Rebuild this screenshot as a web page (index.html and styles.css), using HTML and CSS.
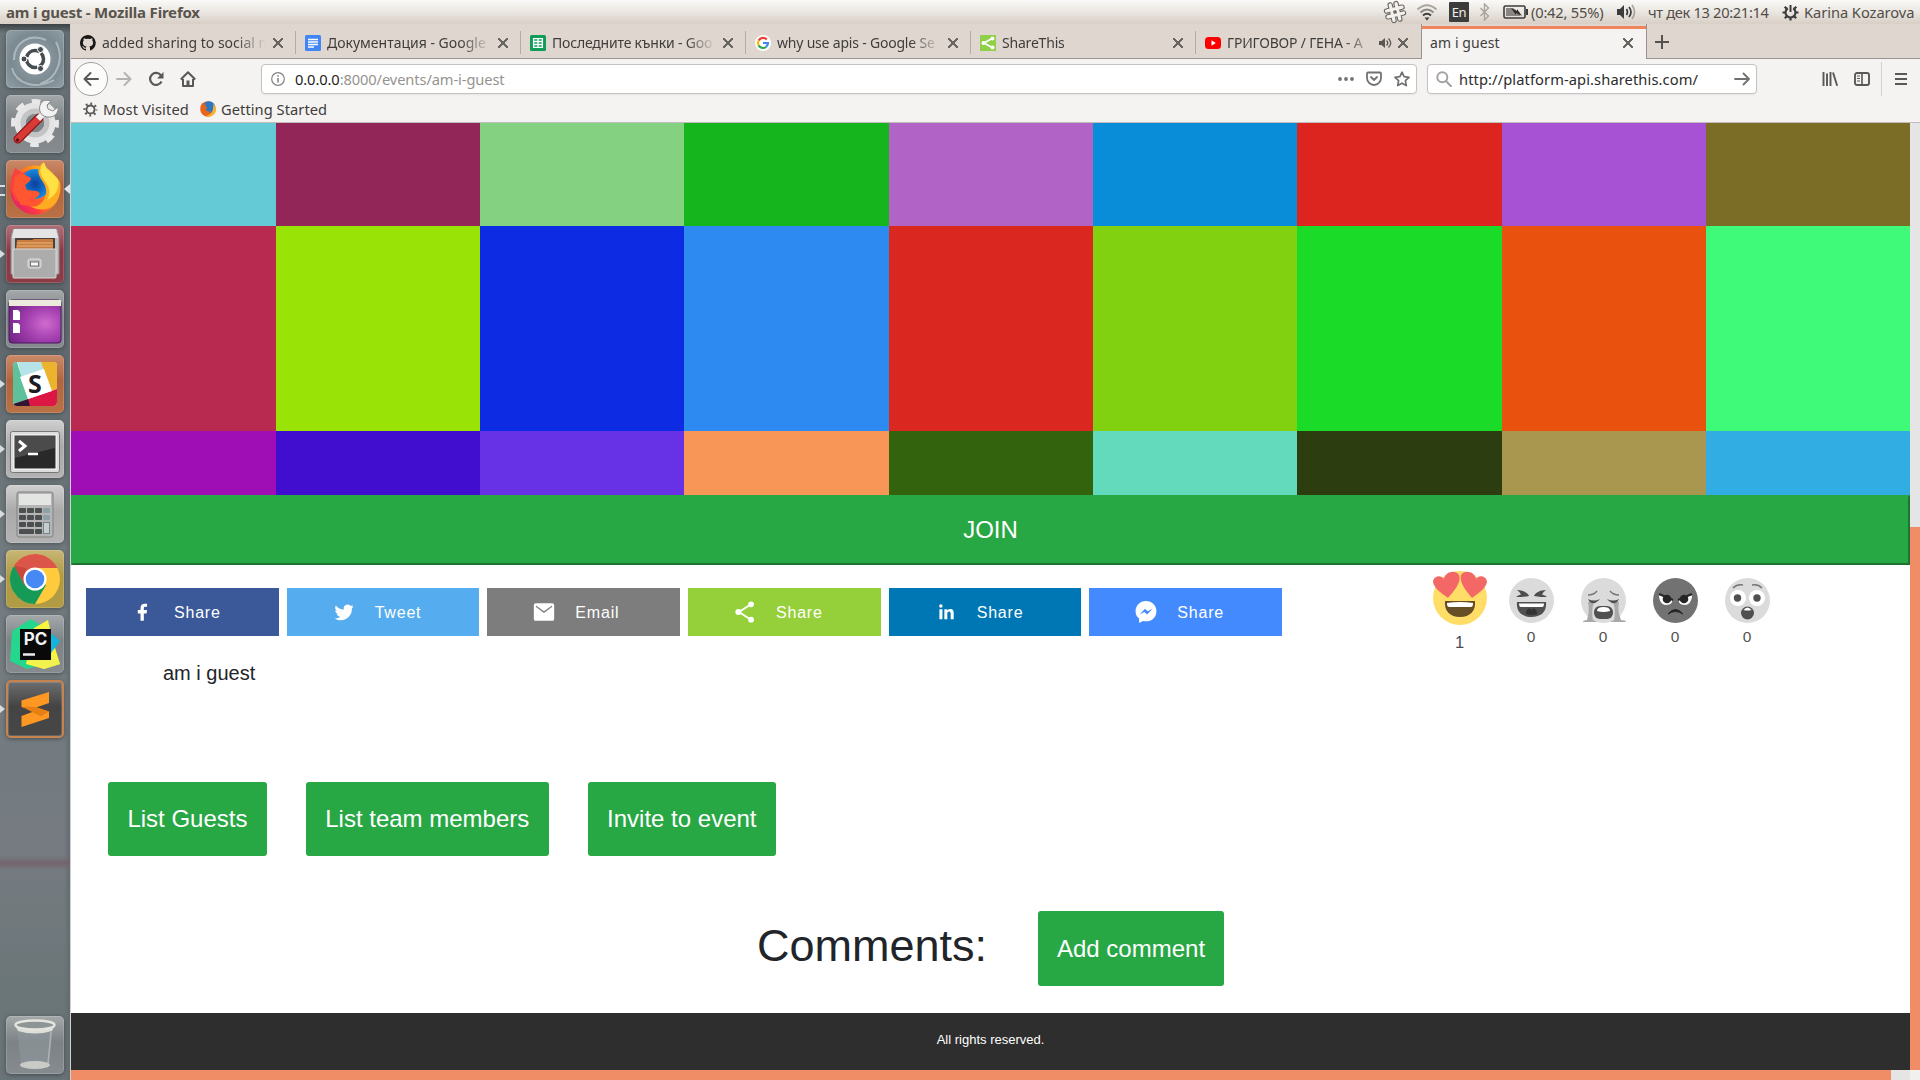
FILE: index.html
```html
<!DOCTYPE html>
<html lang="en">
<head>
<meta charset="utf-8">
<title>am i guest</title>
<link rel="stylesheet" href="styles.css">
</head>
<body>
<header class="panel">
  <span class="panel-title">am i guest - Mozilla Firefox</span>
  <div class="indicators">
    <svg class="ind-hash" width="24" height="24" viewBox="0 0 24 24"><g transform="rotate(-14 12 12)" fill="none" stroke-linecap="round"><path d="M9 4v16M15 4v16M4 9h16M4 15h16" stroke="#6b6762" stroke-width="5.400"/><path d="M9 4v16M15 4v16M4 9h16M4 15h16" stroke="#f3f0ec" stroke-width="3.200"/><path d="M11 11h2v2h-2z" stroke="#6b6762" stroke-width="1"/></g></svg>
    <svg class="ind-wifi" width="22" height="20" viewBox="0 0 22 20" fill="none" stroke-width="2"><path d="M1.500 7.500Q11-1 20.500 7.500" stroke="#aaa49e"/><path d="M4.500 10.500Q11 4.500 17.500 10.500" stroke="#8d8882"/><path d="M7 13.500Q11 10 15 13.500" stroke="#3c3c3c"/><path d="M8.500 15.500h5L11 18.500z" fill="#3c3c3c" stroke="none"/></svg>
    <span class="lang">En</span>
    <svg class="ind-bt" width="12" height="18" viewBox="0 0 12 18" fill="none" stroke="#aaa49e" stroke-width="1.400"><path d="M1.500 5l8 8L5.500 17V1l4 4-8 8"/></svg>
    <svg class="ind-bat" width="25" height="14" viewBox="0 0 25 14"><rect x="1" y="1" width="21" height="12" rx="1.500" fill="none" stroke="#3c3c3c" stroke-width="1.600"/><rect x="23" y="4" width="2" height="6" fill="#3c3c3c"/><path d="M3 3h7l7 5v3H3z" fill="#8a8681"/><path d="M8 3l6 3v-2l5 7-6-3v2z" fill="#2f2f2f"/></svg>
    <span class="ind-battery-text">(0:42, 55%)</span>
    <svg class="ind-snd" width="21" height="16" viewBox="0 0 21 16"><path d="M1 5h3l4-4v14l-4-4H1z" fill="#3c3c3c"/><g fill="none" stroke-width="1.700"><path d="M10.500 5q2 3 0 6M13 3q4 5 0 10" stroke="#3c3c3c"/><path d="M16 1q5 7 0 14" stroke="#aaa49e"/></g></svg>
    <span class="ind-date">чт дек 13 20:21:14</span>
    <svg class="ind-gear" width="17" height="17" viewBox="0 0 17 17"><g fill="none" stroke="#3c3c3c"><path d="M5.800 4.300a5 5 0 1 0 5.400 0" stroke-width="2.200"/><path d="M8.500 1v7" stroke-width="2"/><path d="M3.500 8.500H.5M16.500 8.500h-3M5 12l-2.200 2.200M12 12l2.200 2.200M8.500 13.500v3M4.500 4.500L2.700 2.700M12.500 4.500l1.800-1.800" stroke-width="2.200"/></g></svg>
    <span class="ind-user">Karina Kozarova</span>
  </div>
</header>

<div class="desktop">
<aside class="launcher">
  <div class="tile t-dash"><svg viewBox="0 0 58 58"><path d="M8 30C8 12 24 3 40 10M50 12c8 15 3 36-16 42M48 50C30 60 10 54 6 38" fill="none" stroke="#c9d4d8" stroke-width="2" opacity=".6"/><circle cx="29" cy="29" r="15.500" fill="#fff"/><g fill="none" stroke="#454d50" stroke-width="3.500"><circle cx="29" cy="29" r="8.500" stroke-dasharray="15.800 2" stroke-dashoffset="7"/></g><g fill="#454d50" stroke="#fff" stroke-width="1"><circle cx="18" cy="29" r="3"/><circle cx="34.500" cy="19.500" r="3"/><circle cx="34.500" cy="38.500" r="3"/></g></svg></div>
  <div class="tile t-gray"><svg viewBox="0 0 58 58"><circle cx="29" cy="28" r="15" fill="none" stroke="#e4e4e4" stroke-width="11"/><circle cx="29" cy="28" r="21.500" fill="none" stroke="#e8e8e8" stroke-width="5" stroke-dasharray="8.500 8.400" stroke-dashoffset="4"/><circle cx="29" cy="28" r="12" fill="none" stroke="#c2c4c6" stroke-width="5"/><path d="M12 44L33 23" stroke="#8f1a1a" stroke-width="9" stroke-linecap="round"/><path d="M12 44L33 23" stroke="#d93a35" stroke-width="6.500" stroke-linecap="round"/><path d="M32 24l5-5" stroke="#eee" stroke-width="6"/><path d="M37 6c-6 5-4 15 4 16s12-5 11-10l-5 4-5-2-1-4 4-4c-3-1-6-1-8 0z" fill="#f2f2f2" stroke="#8b8b8b"/><circle cx="11.500" cy="45" r="1.700" fill="#5b1515"/></svg></div>
  <div class="tile t-orange run-multi focused"><svg viewBox="0 0 58 58"><defs><linearGradient id="fx" x1="1" y1=".1" x2=".1" y2=".7"><stop offset="0" stop-color="#ffd93b"/><stop offset=".45" stop-color="#ff8d14"/><stop offset=".8" stop-color="#ff3647"/><stop offset="1" stop-color="#e8285f"/></linearGradient><radialGradient id="fb"><stop offset="0" stop-color="#0a3f9c"/><stop offset="1" stop-color="#168be0"/></radialGradient></defs><circle cx="29" cy="30" r="24.500" fill="url(#fx)"/><path d="M4.500 30C4 20 7 13 9 8l7 5q5-3 11-2l4 20-8 14L9 40z" fill="#fb4042"/><circle cx="29" cy="24" r="15" fill="url(#fb)"/><path d="M9 16l7-3 9 5-1 3-5 4 2 5 9 1q5 1 3 4-5 6-11 4 8 5 16-1l-3 9-20-2-8-14z" fill="#fd5630"/><path d="M36 3c-6 6-4 12 1 19 6 9 3 17-3 22-3 3-8 3-11 2 25 12 34-10 31-24C51 15 41 12 36 3z" fill="#ffab22"/><path d="M38 2c-6 6-4 13 1 19 5 7 6 13 2 19 9-4 13-13 11-20C49 14 40 11 38 2z" fill="#ffe045"/></svg></div>
  <div class="tile t-red run"><svg viewBox="0 0 58 58"><path d="M7 4h44l2 8v37H5V12z" fill="#bfbfbf" stroke="#8c8c8c"/><path d="M8 4h42l2 9H6z" fill="#e4e4e4"/><rect x="9" y="13" width="40" height="13" fill="#4b403a"/><path d="M11 15h15l2-1h19v10H10z" fill="#c97c40"/><path d="M11 18h36M11 21h36" stroke="#eab678" stroke-width="1"/><rect x="7" y="24" width="43" height="29" rx="1" fill="#acacac" stroke="#d9d9d9"/><rect x="22" y="34" width="13" height="9" rx="2" fill="#bbb" stroke="#e2e2e2"/><rect x="24.500" y="37" width="8" height="4" fill="#f8f8f8" stroke="#777"/></svg></div>
  <div class="tile t-gray"><svg viewBox="0 0 58 58"><defs><radialGradient id="dk" cx=".7" cy=".55" r=".8"><stop offset="0" stop-color="#cf6bcf"/><stop offset=".5" stop-color="#a03cac"/><stop offset="1" stop-color="#6d2383"/></radialGradient></defs><rect x="3" y="10" width="52" height="43" rx="3" fill="url(#dk)" stroke="#4d175f"/><path d="M3 10h52v6H3z" fill="#eceadb"/><path d="M7 20h5l2 2v8H7zM7 33h5l2 2v8H7z" fill="#fff"/></svg></div>
  <div class="tile t-orange run"><svg viewBox="0 0 58 58"><clipPath id="sl"><rect x="7" y="7" width="44" height="44" rx="4"/></clipPath><g clip-path="url(#sl)"><path d="M7 7h44v44H7z" fill="#fff"/><path d="M12 7h23l3 7-23 8z" fill="#b5e3e8"/><path d="M35 7h16v27l-6 2z" fill="#ecb32d"/><path d="M7 7h4l11 37-15 5z" fill="#5ec19c"/><path d="M22 44l29-10v17H20z" fill="#dc1744"/><path d="M7 49l15-5 2 7H7z" fill="#311633"/><path d="M14 22l24-8 8 22-24 8z" fill="#fff"/></g><text x="29" y="38" text-anchor="middle" class="slack-s">S</text></svg></div>
  <div class="tile t-light run"><svg viewBox="0 0 58 58"><rect x="4.500" y="11.500" width="49" height="41" rx="2" fill="#dcdcdc" stroke="#777"/><rect x="8" y="15" width="42" height="34" fill="#292929" stroke="#fff"/><path d="M9 16h40v12L9 38z" fill="#4b4b4b"/><path d="M13 21l6 5-6 5" fill="none" stroke="#fff" stroke-width="3"/><path d="M22 34h10" stroke="#fff" stroke-width="2.500"/></svg></div>
  <div class="tile t-light run"><svg viewBox="0 0 58 58"><rect x="11" y="7" width="36" height="45" rx="2" fill="#b5b5b5" stroke="#808080"/><rect x="13" y="9" width="32" height="11" fill="#e3e5e3"/><g fill="#4b4f50"><rect x="13" y="23" width="7" height="5" rx="1"/><rect x="21" y="23" width="7" height="5" rx="1"/><rect x="29" y="23" width="7" height="5" rx="1"/><rect x="13" y="30" width="7" height="5" rx="1"/><rect x="21" y="30" width="7" height="5" rx="1"/><rect x="29" y="30" width="7" height="5" rx="1"/><rect x="13" y="37" width="7" height="5" rx="1"/><rect x="21" y="37" width="7" height="5" rx="1"/><rect x="29" y="37" width="7" height="5" rx="1"/><rect x="13" y="44" width="15" height="5" rx="1"/><rect x="29" y="44" width="7" height="5" rx="1"/></g><g fill="#8da1a9"><rect x="37" y="23" width="7" height="5" rx="1"/><rect x="37" y="30" width="7" height="5" rx="1"/></g><rect x="37.500" y="37.500" width="6" height="11" fill="#c3ced2" stroke="#75858b"/></svg></div>
  <div class="tile t-gold run"><svg viewBox="0 0 58 58"><circle cx="29" cy="29" r="25" fill="#ffcb3d"/><path d="M29 29L7.300 16.500A25 25 0 0 0 29 54l11-19z" fill="#159a58"/><path d="M29 18h22.400A25 25 0 0 0 8 15.500L18 35z" fill="#dc5549"/><path d="M8 15.500L18.500 34 29 29z" fill="#159a58"/><path d="M8 15.500L18 33l2-15z" fill="#c9473d"/><circle cx="29" cy="29" r="11.500" fill="#fff"/><circle cx="29" cy="29" r="9.300" fill="#4688f4"/></svg></div>
  <div class="tile t-gray"><svg viewBox="0 0 58 58"><path d="M6 16L25 4l14 9-8 38-10 3-17-8z" fill="#25d68d"/><path d="M28 13L42 5l4 18 8 26-16 5-18-5z" fill="#f8f440"/><path d="M43 16l11 10-9 12z" fill="#12b5dd"/><path d="M21 45l20-10 13 14-16 5z" fill="#f1f24d"/><rect x="14" y="14" width="31" height="31" fill="#090909"/><text x="29.500" y="30" text-anchor="middle" class="pc-text">PC</text><path d="M17 39.500h12" stroke="#eee" stroke-width="2.500"/></svg></div>
  <div class="tile t-sublime run"><svg viewBox="0 0 58 58"><path d="M15.500 20.500L43 12v11L30 27.500l13 4V38L15.500 47V36L29 31l-13.500-4z" fill="#ff9822"/><path d="M15.500 26.500L30 27l13 4.500-8 5z" fill="#e77f14"/></svg></div>
  <div class="tile t-gray t-trash"><svg viewBox="0 0 58 58"><path d="M11 12l4 38q14 7 28 0l4-38z" fill="#8d989c" opacity=".6"/><ellipse cx="29" cy="49" rx="15" ry="4" fill="#c9ccc6"/><path d="M9 9l3 6q17 5 34 0l3-6z" fill="#deded9"/><ellipse cx="29" cy="9" rx="19.500" ry="4.500" fill="#8e9596" stroke="#e4e4df" stroke-width="2.500"/><path d="M45 16l-3 32" stroke="#c4cccd" stroke-width="1.500" opacity=".6"/></svg></div>
</aside>

<main class="browser">
  <nav class="tabs">
    <div class="tab"><svg class="fav" viewBox="0 0 16 16"><path fill="#191717" d="M8 0C3.600 0 0 3.600 0 8c0 3.500 2.300 6.500 5.500 7.600.4.100.5-.2.500-.4v-1.500c-2.200.5-2.700-1-2.700-1-.4-.9-.9-1.200-.9-1.200-.7-.5.100-.5.100-.5.800.1 1.200.8 1.200.8.700 1.300 1.900.9 2.300.7.100-.5.300-.9.500-1.100C4.700 11.200 2.900 10.500 2.900 7.500c0-.9.300-1.600.8-2.100-.1-.2-.4-1 .1-2.100 0 0 .7-.2 2.200.8a7.700 7.700 0 0 1 4 0c1.500-1 2.200-.8 2.200-.8.400 1.100.2 1.900.1 2.100.5.600.8 1.300.8 2.100 0 3.100-1.900 3.700-3.700 3.900.3.300.6.700.6 1.500v2.200c0 .2.100.5.500.4A8 8 0 0 0 8 0z"/></svg><span class="tab-text w-160 loose">added sharing to social n</span><i class="x"></i></div>
    <div class="tab"><svg class="fav" viewBox="0 0 16 16"><rect width="16" height="16" rx="1.500" fill="#4285f4"/><path d="M3 4.500h10M3 7h10M3 9.500h10M3 12h6" stroke="#fff" stroke-width="1.300"/></svg><span class="tab-text w-160 loose">Документация - Google</span><i class="x"></i></div>
    <div class="tab"><svg class="fav" viewBox="0 0 16 16"><rect width="16" height="16" rx="1.500" fill="#0f9d58"/><path d="M3.600 3.600h8.800v8.800H3.600zM3.600 6.500h8.800M3.600 9.500h8.800M8 3.600v8.800" fill="none" stroke="#fff" stroke-width="1.300"/></svg><span class="tab-text w-160">Последните кънки - Goo</span><i class="x"></i></div>
    <div class="tab"><svg class="fav" viewBox="0 0 16 16"><circle cx="8" cy="8" r="8" fill="#fff"/><g fill="none" stroke-width="2.200"><path d="M11.800 4.600A5 5 0 0 0 3.600 5.600" stroke="#ea4335"/><path d="M3.600 5.600a5 5 0 0 0 0 4.800" stroke="#fbbc05"/><path d="M3.600 10.400a5 5 0 0 0 7.700 1.300" stroke="#34a853"/><path d="M11.300 11.700A5 5 0 0 0 13 8H8" stroke="#4285f4"/></g></svg><span class="tab-text w-160">why use apis - Google Se</span><i class="x"></i></div>
    <div class="tab"><svg class="fav" viewBox="0 0 16 16"><path d="M0 0h16v16H0z" fill="#8ed047"/><path d="M13 3L4 8l9 5" fill="none" stroke="#fff" stroke-width="1.800"/><g fill="#fff"><circle cx="12.500" cy="3.500" r="2"/><circle cx="3.500" cy="8" r="2"/><circle cx="12.500" cy="12.500" r="2"/></g></svg><span class="tab-text w-160">ShareThis</span><i class="x"></i></div>
    <div class="tab"><svg class="fav" viewBox="0 0 16 16"><rect y="2" width="16" height="12" rx="3.500" fill="#f00"/><path d="M6.500 5.300v5.400L10.800 8z" fill="#fff"/></svg><span class="tab-text w-146">ГРИГОВОР / ГЕНА - А</span><svg class="tab-sound" width="14" height="12" viewBox="0 0 14 12"><path d="M0 4h2.500L6 1v10L2.500 8H0z" fill="#5a5652"/><path d="M7.500 3.500q2.500 2.500 0 5M9.500 1.500q4.500 4.500 0 9" fill="none" stroke="#5a5652" stroke-width="1.300"/></svg><i class="x"></i></div>
    <div class="tab active"><span class="tab-text active-text">am i guest</span><i class="x"></i></div>
    <svg class="plus" width="14" height="14" viewBox="0 0 14 14"><path d="M7 0v14M0 7h14" stroke="#55514e" stroke-width="2"/></svg>
  </nav>

  <div class="toolbar">
    <span class="back"><svg width="16" height="16" viewBox="0 0 16 16" fill="none" stroke="#5a5857" stroke-width="2" stroke-linecap="round" stroke-linejoin="round"><path d="M15 8H1.500M7.500 2l-6 6 6 6"/></svg></span>
    <svg class="fwd" width="16" height="16" viewBox="0 0 16 16" fill="none" stroke="#b5b3b1" stroke-width="2" stroke-linecap="round" stroke-linejoin="round"><path d="M1 8h13.500M8.500 2l6 6-6 6"/></svg>
    <svg class="reload" width="16" height="16" viewBox="0 0 16 16"><path d="M13.500 10.500A6 6 0 1 1 13 4.500" fill="none" stroke="#5a5857" stroke-width="2.200"/><path d="M15.500 1v6.500H9z" fill="#5a5857"/></svg>
    <svg class="home" width="16" height="16" viewBox="0 0 16 16"><path d="M.8 8.500L8 1.300l7.200 7.200M3 8v7h10V8" fill="none" stroke="#5a5857" stroke-width="2" stroke-linejoin="round"/><path d="M6.500 9.500h3V15h-3z" fill="#5a5857"/></svg>
    <div class="urlbar">
      <svg width="14" height="14" viewBox="0 0 14 14"><circle cx="7" cy="7" r="6.300" fill="none" stroke="#858381" stroke-width="1.200"/><path d="M7 6v4.500M7 3.300v1.500" stroke="#858381" stroke-width="1.600"/></svg>
      <span class="url"><b>0.0.0.0</b>:8000/events/am-i-guest</span>
      <svg class="dots" width="16" height="16" viewBox="0 0 16 16" fill="#737170"><circle cx="2" cy="8" r="1.900"/><circle cx="8" cy="8" r="1.900"/><circle cx="14" cy="8" r="1.900"/></svg>
      <svg width="16" height="16" viewBox="0 0 16 16" fill="none" stroke="#737170" stroke-width="1.800" stroke-linecap="round" stroke-linejoin="round"><path d="M2 1.500h12q1 0 1 1V7a7 7 0 0 1-14 0V2.500q0-1 1-1zM5 6l3 3 3-3"/></svg>
      <svg class="star" width="16" height="16" viewBox="0 0 16 16" fill="none" stroke="#737170" stroke-width="1.700" stroke-linejoin="round"><path d="M8 1.200l2.100 4.500 4.900.6-3.600 3.400.9 4.900L8 12.200l-4.300 2.400.9-4.900L1 6.300l4.900-.6z"/></svg>
    </div>
    <div class="search">
      <svg width="16" height="16" viewBox="0 0 16 16" fill="none" stroke="#a5a3a1" stroke-width="2" stroke-linecap="round"><circle cx="6.300" cy="6.300" r="5"/><path d="M10.200 10.200l4.800 5"/></svg>
      <span class="search-text">http://platform-api.sharethis.com/</span>
      <svg width="16" height="16" viewBox="0 0 16 16" fill="none" stroke="#737170" stroke-width="1.800" stroke-linecap="round" stroke-linejoin="round"><path d="M1 8h14M9.500 2.500L15 8l-5.500 5.500"/></svg>
    </div>
    <svg class="lib" width="16" height="14" viewBox="0 0 16 14" stroke="#5a5857" stroke-width="1.900" fill="none"><path d="M1.500 0v14M5 1.500V14M8.500 0v14M11 .5l4.200 13.300"/></svg>
    <svg class="side" width="16" height="14" viewBox="0 0 16 14" fill="none" stroke="#5a5857"><rect x="1" y="1" width="14" height="12" rx="2" stroke-width="1.900"/><path d="M8 1v12" stroke-width="1.600"/><path d="M3 4h3M3 6.500h3M3 9h3" stroke-width="1.200"/></svg>
    <i class="vsep"></i>
    <svg class="menu" width="12" height="12" viewBox="0 0 12 12"><path d="M0 1h12M0 6h12M0 11h12" stroke="#5a5857" stroke-width="2"/></svg>
  </div>

  <div class="bookmarks">
    <svg width="15" height="15" viewBox="0 0 15 15" fill="none" stroke="#5a5857"><circle cx="7.500" cy="7.500" r="4" stroke-width="1.800"/><circle cx="7.500" cy="7.500" r="5.900" stroke-width="2.400" stroke-dasharray="1.800 2.834" stroke-dashoffset=".9"/></svg>
    <span class="bm1">Most Visited</span>
    <svg width="16" height="16" viewBox="0 0 16 16"><circle cx="8" cy="8" r="7.800" fill="#e8641b"/><circle cx="9" cy="6.300" r="6" fill="#2a78c4"/><path d="M.8 5L2 2l2 1.800 2.500-.2L5.500 5.500l2 1.500-2 1.500c2 2.500 4 2 5.500 1.500-1 3-4 3.500-6 2.500L1 9z" fill="#e8641b"/><path d="M13 3c3 3 3.500 6 2 9s-6 4-9 3c5-1 8-5 7-12z" fill="#f9b22d"/></svg>
    <span class="bm2">Getting Started</span>
  </div>

  <div class="viewport">
    <div class="page">
      <div class="mosaic">
        <i class="c1"></i><i class="c2"></i><i class="c3"></i><i class="c4"></i><i class="c5"></i><i class="c6"></i><i class="c7"></i><i class="c8"></i><i class="c9"></i>
        <i class="c10"></i><i class="c11"></i><i class="c12"></i><i class="c13"></i><i class="c14"></i><i class="c15"></i><i class="c16"></i><i class="c17"></i><i class="c18"></i>
        <i class="c19"></i><i class="c20"></i><i class="c21"></i><i class="c22"></i><i class="c23"></i><i class="c24"></i><i class="c25"></i><i class="c26"></i><i class="c27"></i>
      </div>
      <button class="join">JOIN</button>
      <section class="social">
        <div class="shares">
          <a class="share fb"><svg viewBox="0 0 40 40"><path d="M21.500 36V22.500h5l.8-6h-5.800v-3.400c0-1.700.5-2.800 2.900-2.800h3V5.200C26.900 5.100 25.100 5 23 5c-4.500 0-7.500 2.700-7.500 7.700v3.800h-5v6h5V36z"/></svg><span>Share</span></a>
          <a class="share tw"><svg viewBox="0 0 40 40"><path d="M37.500 10c-1.200.6-2.700 1-4.100 1.200 1.500-.9 2.600-2.300 3.100-3.900-1.400.8-2.900 1.400-4.500 1.700a7.100 7.100 0 0 0-12.200 6.500A20.300 20.300 0 0 1 5.200 8a7.100 7.100 0 0 0 2.200 9.500c-1.200 0-2.300-.3-3.200-.9 0 3.600 2.400 6.500 5.700 7.100-1 .3-2.100.4-3.200.1.900 2.900 3.600 4.900 6.700 5A14.500 14.500 0 0 1 3 31.700a20.300 20.300 0 0 0 31.300-18c1.400-1 2.500-2.200 3.200-3.700z"/></svg><span>Tweet</span></a>
          <a class="share em"><svg viewBox="0 0 40 40"><path fill-rule="evenodd" d="M5 4h30A3.500 3.500 0 0 1 38.500 7.500v25a3.500 3.500 0 0 1-3.500 3.500H5A3.500 3.500 0 0 1 1.500 32.500v-25A3.500 3.500 0 0 1 5 4zM5.500 8v3L20 22l14.500-11V8L20 18.500z"/></svg><span>Email</span></a>
          <a class="share st"><svg viewBox="0 0 40 40"><path d="M31 6L9 20l22 14" fill="none" stroke="#fff" stroke-width="3.500"/><circle cx="31" cy="6" r="5.200"/><circle cx="8" cy="20" r="5.500"/><circle cx="31" cy="34" r="5.200"/></svg><span>Share</span></a>
          <a class="share li"><svg viewBox="0 0 40 40"><path d="M8 15h5.500v18H8zM10.700 6a3.200 3.200 0 1 1 0 6.400 3.200 3.200 0 0 1 0-6.400zM17 15h5.200v2.500c.8-1.500 2.600-3 5.300-3 5.600 0 6.500 3.800 6.500 8.500v10h-5.500v-8.800c0-2.200 0-4.900-2.900-4.900s-3.200 2.300-3.200 4.700v9H17z"/></svg><span>Share</span></a>
          <a class="share ms"><svg viewBox="0 0 40 40"><path fill-rule="evenodd" d="M20 0c11 0 19 8 19 18.500S31 37 20 37c-2 0-3.800-.2-5.500-.8L7.500 40v-8C3.500 28.500 1 24 1 18.500 1 8 9 0 20 0zM8.500 24.500L18 14l5 4.500 9-4.500-10 10.500-5-4.500z"/></svg><span>Share</span></a>
        </div>
        <div class="reactions">
          <div class="reaction chosen"><svg viewBox="0 0 54 54"><circle cx="27" cy="27" r="27" fill="#ffdd67"/><path d="M12 30h30c1 10-5 16-15 16s-16-6-15-16z" fill="#664e27"/><path d="M14 32q13-2 26 0c0 4-1 4-4 4H18c-3 0-4 0-4-4z" fill="#fff"/><path d="M15 27C8 22 1 17 0 11 0 5 8 3 11 8 12 1 22-2 26 4c3 8-6 17-11 23z" fill="#f46767"/><path d="M39 27c7-5 14-10 15-16 0-6-8-8-11-3C42 1 32-2 28 4c-2 8 6 17 11 23z" fill="#f46767"/></svg><span>1</span></div>
          <div class="reaction"><svg viewBox="0 0 45 45"><circle cx="22.500" cy="22.500" r="22.500" fill="#dbdbdb"/><path d="M8 24h29c1 10-5 15-14.500 15S7 34 8 24z" fill="#505050"/><path d="M10 25.500h25c0 3-1 3.500-3 3.500H13c-2 0-3-.5-3-3.500z" fill="#fff"/><path d="M17 36c0-7 5-6 5.500-4 .5-2 5.500-3 5.500 4q-5 2-11 0z" fill="#343434"/><path d="M8 12c6 0 11 3 12 6-5 1-9 1-13 1q2-2 5-2.500Q11 14 8 12zM37 12c-6 0-11 3-12 6 5 1 9 1 13 1q-2-2-5-2.500 1-2.500 4-4.500z" fill="#4d4d4d"/></svg><span>0</span></div>
          <div class="reaction"><svg viewBox="0 0 45 45"><circle cx="22.500" cy="22.500" r="22.500" fill="#dbdbdb"/><path d="M7 24h6q-3 9-1 18l4 2H2q0-2 4-2 3-10 1-18zM38 24h-6q3 9 1 18l-4 2h16q0-2-5-2-4-10-2-18z" fill="#a9a9a9"/><rect x="13" y="28" width="19" height="13" rx="6" fill="#505050"/><path d="M16 33q0-4 6.500-4t6.500 4q-6.500 2-13 0z" fill="#fff"/><g fill="#505050"><path d="M7 21q6 3 12 0-4 5-8 4-3-1-4-4zM38 21q-6 3-12 0 4 5 8 4 3-1 4-4z"/></g><path d="M7 17q6 0 9-4M38 17q-6 0-9-4" fill="none" stroke="#757575" stroke-width="1.400"/></svg><span>0</span></div>
          <div class="reaction"><svg viewBox="0 0 45 45"><circle cx="22.500" cy="22.500" r="22.500" fill="#727272"/><path d="M6 17c0 6 3 10 7 10 5 0 7-3 6-6zM39 17c0 6-3 10-7 10-5 0-7-3-6-6z" fill="#fff"/><circle cx="14" cy="21" r="4.300" fill="#262626"/><circle cx="31" cy="21" r="4.300" fill="#262626"/><path d="M6 16l14 6M39 16l-14 6" stroke="#262626" stroke-width="2"/><path d="M15 36q7.500-9 15 0-7.500-5-15 0z" fill="#262626" stroke="#262626"/></svg><span>0</span></div>
          <div class="reaction"><svg viewBox="0 0 45 45"><circle cx="22.500" cy="22.500" r="22.500" fill="#dbdbdb"/><circle cx="13" cy="20" r="8" fill="#fff"/><circle cx="32" cy="20" r="8" fill="#fff"/><circle cx="12.500" cy="20" r="3.700" fill="#505050"/><circle cx="32" cy="20" r="3.700" fill="#505050"/><circle cx="22.500" cy="35" r="6.500" fill="#505050"/><path d="M18.500 32q4-5 8 0-4 1-8 0z" fill="#fff"/><path d="M8 10q4-4 10-3M37 10q-4-4-10-3" fill="none" stroke="#757575" stroke-width="1.500"/></svg><span>0</span></div>
        </div>
      </section>
      <p class="event-name">am i guest</p>
      <div class="actions"><a class="btn">List Guests</a><a class="btn">List team members</a><a class="btn">Invite to event</a></div>
      <div class="comments"><h2>Comments:</h2><a class="btn">Add comment</a></div>
      <footer>All rights reserved.</footer>
    </div>
    <div class="vscroll"><i></i></div>
    <div class="hscroll"><i></i></div>
    <div class="corner"></div>
  </div>
</main>
</div>
</body>
</html>
```
FILE: styles.css
```css
* { box-sizing: border-box; }
body { margin: 0; width: 1920px; height: 1080px; overflow: hidden; font: 14.670px/20px "Noto Sans", "Open Sans", sans-serif; color: #3f3d3b; background: #737a7e; }
svg { display: block; flex: none; }
span { white-space: nowrap; }

.panel { height: 24px; display: flex; justify-content: space-between; align-items: center; padding: 0 6px; background: linear-gradient(#fbfaf8, #ece8e3 45%, #d8cfc6); }
.panel-title { padding-bottom: 1px; font-weight: 700; font-size: 15px; color: #59544c; letter-spacing: -.2px; }
.indicators { display: flex; align-items: center; height: 24px; color: #514d48; }
.ind-hash { margin-right: 9px; }
.ind-wifi { margin-right: 11px; }
.lang { width: 20px; height: 20px; background: #3c3c3c; color: #f2efeb; text-align: center; font-size: 13px; line-height: 20px; border-radius: 1px; letter-spacing: -.5px; }
.ind-bt { margin: 0 11px 0 10px; }
.ind-bat { margin: 0 3px 0 1px; }
.ind-battery-text, .ind-date, .ind-user { padding-bottom: 1px; }
.ind-battery-text { width: 73px; letter-spacing: -.2px; }
.ind-snd { margin: 0 11px 0 12px; }
.ind-date { width: 122px; letter-spacing: -.33px; }
.ind-gear { margin: 0 5px 0 12px; }
.ind-user { width: 110px; letter-spacing: -.05px; }

.desktop { display: flex; height: 1056px; }
.launcher { width: 71px; border-right: 1px solid #cfd2d3; padding: 6px 0 6px 6px; display: flex; flex-direction: column; gap: 7px; background: linear-gradient(#3b4043, transparent 9px), linear-gradient(transparent 832px, rgba(116, 95, 105, .8) 839px, transparent 846px), linear-gradient(90deg, transparent 64px, #646b70), linear-gradient(#6d777b, #5d666b 300px, #687276 400px, #737c80 540px, #757b80 840px, #6b7679 960px, #697478); }
.tile { position: relative; width: 58px; height: 58px; border-radius: 5px; flex: none; box-shadow: 0 1px 4px rgba(30, 35, 38, .5), inset 0 0 0 1px rgba(255, 255, 255, .16); }
.tile svg { width: 58px; height: 58px; }
.t-dash { background: radial-gradient(circle, #97a5ab, #7b8a90 60%, #91a0a7); }
.t-gray { background: linear-gradient(#a4a8aa, #7c8285 45%, #858b8e); }
.t-orange { background: linear-gradient(#cb8a68, #b0653f 45%, #ba7144); }
.t-red { background: linear-gradient(#b37078, #8b3846 45%, #8d3c45); }
.t-light { background: linear-gradient(#d0d0d0, #aaa 45%, #b3b3b3); }
.t-gold { background: linear-gradient(#c7b677, #b09a43 45%, #b19c45); }
.t-sublime { background: linear-gradient(#6d6d6d, #444 45%, #474747); border: 2px solid #c58350; }
.t-sublime svg { margin: -2px; }
.t-trash { margin-top: auto; }
.run::before, .run-multi::before { content: ""; position: absolute; left: -6px; top: 25px; border: 4.500px solid transparent; border-left: 5px solid #d9dcdd; border-right: 0; }
.t-sublime::before { left: -8px; top: 23px; }
.run-multi::before { width: 5px; height: 7px; border: 0; border-top: 2px solid #d9dcdd; border-bottom: 2px solid #d9dcdd; }
.focused::after { content: ""; position: absolute; right: -6px; top: 24px; border: 5px solid transparent; border-right: 6px solid #e3e5e6; border-left: 0; }
.slack-s { font: 700 25px "Noto Sans", sans-serif; fill: #1c1c22; }
.pc-text { font: 700 17px Inter, sans-serif; fill: #f2f2f2; }

.browser { flex: 1; display: flex; flex-direction: column; background: #f4f3f1; }
.tabs { height: 35px; display: flex; background: #dfd6cf; border-bottom: 1px solid #9b948e; }
.tab { position: relative; width: 225px; height: 34px; padding: 4px 0 0 9px; display: flex; align-items: center; }
.tab:not(.active)::after { content: ""; position: absolute; right: 0; top: 7px; width: 1px; height: 23px; background: #b5aca5; }
.tab:nth-child(6)::after { display: none; }
.fav { width: 16px; height: 16px; margin-right: 6px; }
.tab-text { font-size: 14px; letter-spacing: -.2px; }
.w-160, .w-146 { -webkit-mask-image: linear-gradient(90deg, #000 calc(100% - 30px), transparent); mask-image: linear-gradient(90deg, #000 calc(100% - 30px), transparent); }
.w-160 { width: 164px; margin-right: 7px; }
.w-146 { width: 148px; margin-right: 4px; }
.loose { letter-spacing: 0; }
.tab-sound { margin-right: 5px; }
.active { width: 226px; height: 35px; padding: 2px 0 0 8px; background: linear-gradient(#dfd6cf 2px, #f0855c 2px, #f0855c 5px, #f4f3f1 5px); border: solid #9b948e; border-width: 0 1px; }
.active-text { width: 186px; margin-right: 7px; letter-spacing: .1px; }
.x { width: 10px; height: 10px; background: linear-gradient(45deg, transparent 44%, #6a6662 44%, #6a6662 56%, transparent 56%), linear-gradient(-45deg, transparent 44%, #6a6662 44%, #6a6662 56%, transparent 56%); }
.plus { margin: 11px 0 0 8px; }

.toolbar { height: 41px; display: flex; align-items: center; padding: 0 0 1px 3px; flex: none; }
.back { width: 34px; height: 34px; border: 1px solid #a3a09e; border-radius: 50%; background: #fcfcfb; display: flex; align-items: center; justify-content: center; }
.fwd { margin-left: 8px; }
.reload, .home { margin-left: 16px; }
.urlbar, .search { height: 30px; border: 1px solid #c5c2bf; border-radius: 4px; background: #fff; display: flex; align-items: center; box-shadow: 0 1px 2px rgba(0, 0, 0, .06); }
.urlbar { width: 1156px; margin-left: 65px; padding: 0 6px 0 9px; }
.url { flex: 1; margin-left: 10px; color: #96938f; letter-spacing: -.1px; }
.url b { font-weight: 400; color: #222; }
.dots, .urlbar .dots + svg { margin-right: 12px; }
.search { width: 330px; margin-left: 10px; padding: 0 6px 0 8px; }
.search-text { flex: 1; margin-left: 7px; color: #2c2b2a; letter-spacing: .1px; }
.lib { margin-left: 65px; }
.side { margin-left: 16px; }
.vsep { width: 1px; height: 34px; background: #d4d1ce; margin: 0 13px 0 11px; }
.bookmarks { height: 23px; padding: 0 0 4px 12px; border-bottom: 1px solid #c0bdba; display: flex; align-items: center; flex: none; }
.bm1 { width: 88px; margin: 0 9px 0 5px; letter-spacing: .15px; }
.bm2 { margin-left: 5px; letter-spacing: .05px; }

.viewport { flex: 1; display: grid; grid-template: 947px 10px / 1839px 10px; }
.page { background: #fff; font-family: "Liberation Sans", sans-serif; color: #212529; display: flex; flex-direction: column; }
.mosaic { display: grid; grid-template: 103.200px 204.330px 64.470px / 204.700px repeat(7, 204.333px) 203.960px; flex: none; }
.c1 { background: #64cbd6; } .c2 { background: #922659; } .c3 { background: #84d182; }
.c4 { background: #14b51d; } .c5 { background: #b263c6; } .c6 { background: #0a8dd8; }
.c7 { background: #dc251e; } .c8 { background: #a751d4; } .c9 { background: #7c6d26; }
.c10 { background: #b82a50; } .c11 { background: #99e306; } .c12 { background: #0d2be2; }
.c13 { background: #2c8af0; } .c14 { background: #da2820; } .c15 { background: #82d110; }
.c16 { background: #1adb27; } .c17 { background: #e9510f; } .c18 { background: #3efa78; }
.c19 { background: #9f0db4; } .c20 { background: #410dcf; } .c21 { background: #6731e6; }
.c22 { background: #f79657; } .c23 { background: #33640d; } .c24 { background: #64dabd; }
.c25 { background: #2c3d0f; } .c26 { background: #a99750; } .c27 { background: #32ade4; }
.join { height: 70px; flex: none; font: 24px "Liberation Sans", sans-serif; color: #fff; background: #28a745; border: 2px solid; border-color: #28a745 #1c7430 #1c7430 #28a745; padding: 0; }
.social { display: flex; height: 93px; flex: none; }
.shares { display: grid; grid-template-columns: repeat(6, 1fr); gap: 8px; width: 1196px; height: 48px; margin: 23px 0 0 15px; }
.share { display: flex; align-items: center; padding: 2px 0 0 46px; color: #fff; font-size: 16px; letter-spacing: .8px; }
.share svg { width: 22px; height: 22px; margin: -1px 20px 0 0; fill: #fff; }
.fb { background: #3b5998; } .tw { background: #55acee; } .em { background: #7d7d7d; }
.st { background: #95d03a; } .li { background: #0077b5; } .ms { background: #448aff; }
.reactions { display: flex; margin-left: 142px; padding-top: 6px; }
.reaction { width: 72px; display: flex; flex-direction: column; align-items: center; padding-top: 7px; color: #555; font-size: 15.500px; }
.reaction svg { width: 45px; height: 45px; margin-bottom: 4px; }
.reaction.chosen { width: 71px; padding-top: 0; font-size: 16.500px; color: #4a4a58; }
.chosen svg { width: 54px; height: 54px; margin-bottom: 7px; }
.event-name { margin: 0 0 94px 92px; font-size: 20px; line-height: 30px; flex: none; }
.actions { display: flex; gap: 39px; margin-left: 37px; flex: none; }
.btn { height: 74px; padding: 0 19px; background: #28a745; color: #fff; font-size: 24px; line-height: 74px; border-radius: 3px; white-space: nowrap; }
.actions .btn { padding: 0 19.400px; }
.comments { display: flex; justify-content: center; gap: 51px; margin-top: 55px; flex: none; }
.comments .btn { height: 75px; line-height: 76px; }
h2 { margin: 0; font-size: 45px; font-weight: 400; line-height: 70px; }
footer { margin-top: auto; height: 57px; background: #2e2e2e; color: #fff; font-size: 13px; line-height: 54px; text-align: center; flex: none; }
.vscroll { background: #e5e5e5; padding-top: 404px; }
.vscroll i { display: block; height: 543px; background: #f08d66; }
.hscroll { background: #e5e5e5; }
.hscroll i { display: block; width: 1820px; height: 10px; background: #f08d66; }
.corner { background: #f1f0ef; }
```
